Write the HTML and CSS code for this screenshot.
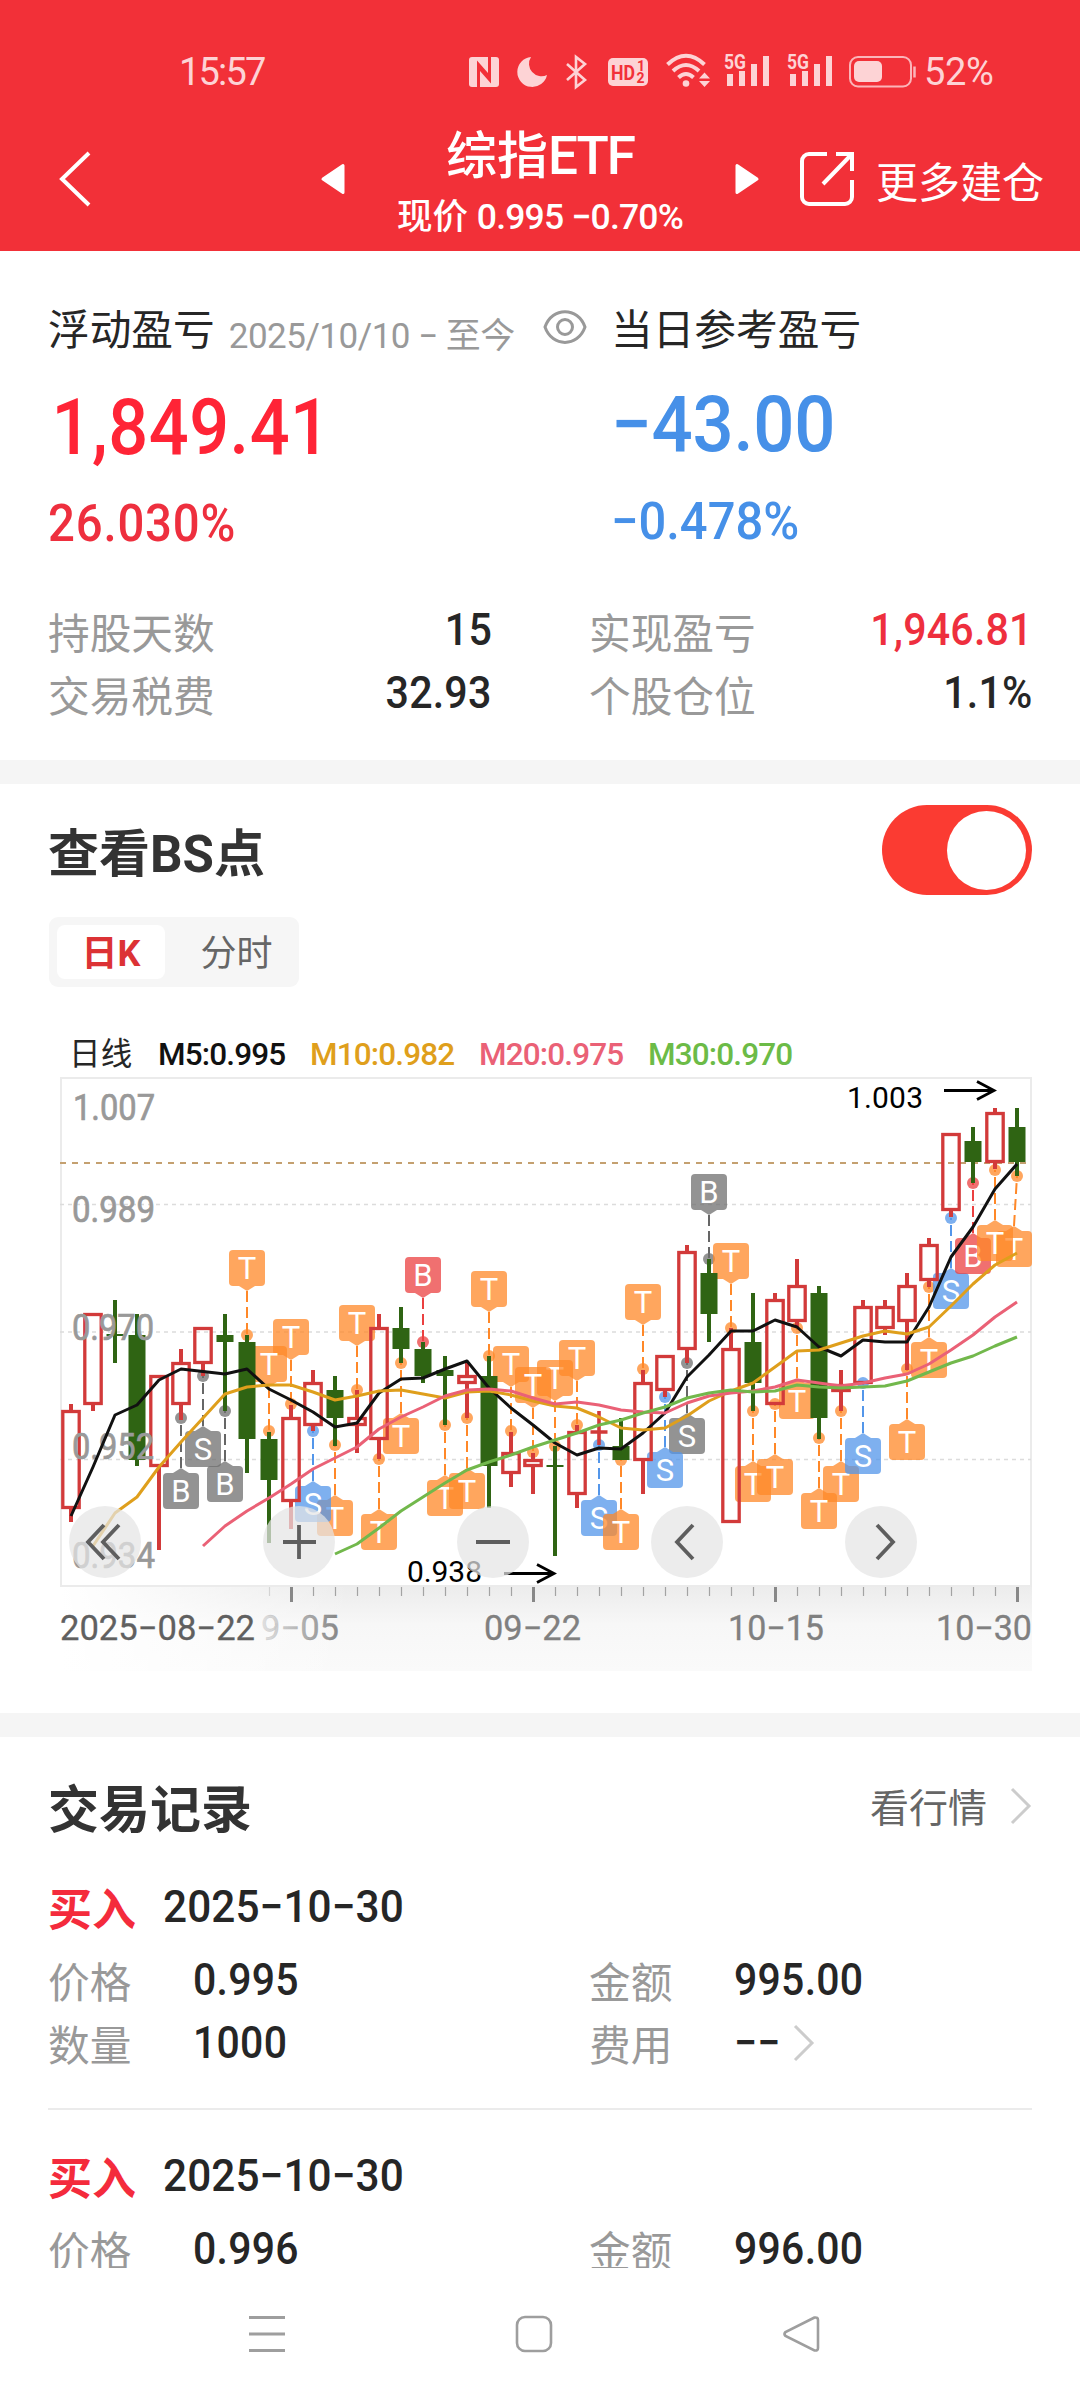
FILE: index.html
```html
<!DOCTYPE html>
<html lang="zh-CN">
<head>
<meta charset="utf-8">
<title>综指ETF</title>
<link rel="stylesheet" href="styles.css">
</head>
<body>
<header class="header">
  <div class="status">
    <span class="clock">15:57</span>
    <svg class="nfc" width="30" height="30" viewBox="0 0 30 30"><rect width="30" height="30" rx="3" fill="#fdd3d5"/><path d="M9.500 30V7.500L20.500 20M20.500 0v22.500L9.500 10" fill="none" stroke="#f23038" stroke-width="3"/></svg>
    <svg class="moon" width="30" height="30" viewBox="0 0 30 30"><path d="M14 0A15 15 0 1 0 30 18A12.500 12.500 0 0 1 14 0Z" fill="#fdd3d5"/></svg>
    <svg class="bt" width="24" height="34" viewBox="0 0 24 34"><path d="M2 9l18 16-9 7V2l9 7L2 25" fill="none" stroke="#fdd3d5" stroke-width="2.600"/></svg>
    <svg class="hd" width="40" height="28" viewBox="0 0 40 28"><rect width="40" height="28" rx="5" fill="#fdd3d5"/><text x="3" y="21.500" class="hd-text" textLength="24" lengthAdjust="spacingAndGlyphs">HD</text><text x="29" y="13" class="hd-num">1</text><text x="28.500" y="25" class="hd-num">2</text></svg>
    <svg class="wifi" width="45" height="34" viewBox="0 0 45 34"><g fill="none" stroke="#fdd3d5" stroke-width="4"><path d="M1.500 11.500Q20 -6 38.500 11.500"/><path d="M7 18Q20 6 33 18"/><path d="M12.500 24.500Q20 17.500 27.500 24.500"/></g><circle cx="20" cy="30.500" r="3.300" fill="#fdd3d5"/><path d="M33 25.500l5.500-6 5.500 6zM33 28l5.500 6 5.500-6z" fill="#fdd3d5"/></svg>
    <svg class="sig" width="46" height="38" viewBox="0 -6 46 38"><text x="0" y="15" class="g5" textLength="22" lengthAdjust="spacingAndGlyphs">5G</text><path d="M3 20h6v12H3zM15 17h6v15h-6zM27 10h6v22h-6zM39 2h6v30h-6z" fill="#fdd3d5"/></svg>
    <svg class="sig sig2" width="46" height="38" viewBox="0 -6 46 38"><text x="0" y="15" class="g5" textLength="22" lengthAdjust="spacingAndGlyphs">5G</text><path d="M3 20h6v12H3zM15 17h6v15h-6zM27 10h6v22h-6zM39 2h6v30h-6z" fill="#fdd3d5"/></svg>
    <svg class="battery" width="67" height="32" viewBox="0 0 67 32"><rect x="1" y="1" width="61" height="29.500" rx="8" fill="none" stroke="#fbb5b9" stroke-width="2"/><rect x="5" y="5" width="28" height="21" rx="5" fill="#fdd3d5"/><path d="M65.500 10.500v11" stroke="#fbb5b9" stroke-width="2.500"/></svg>
    <span class="percent">52%</span>
  </div>
  <div class="titlebar">
    <svg class="back" width="34" height="56" viewBox="0 0 34 56"><path d="M31 2L4 28l27 26" fill="none" stroke="#fff" stroke-width="4"/></svg>
    <svg class="prev" width="24" height="30" viewBox="0 0 24 30"><path d="M22 1.500v27L2 15z" fill="#fff" stroke="#fff" stroke-width="3" stroke-linejoin="round"/></svg>
    <div class="heading">
      <h1>综指<span>ETF</span></h1>
      <p>现价 <span>0.995 −0.70%</span></p>
    </div>
    <svg class="next" width="24" height="30" viewBox="0 0 24 30"><path d="M2 1.500v27L22 15z" fill="#fff" stroke="#fff" stroke-width="3" stroke-linejoin="round"/></svg>
    <svg class="share" width="54" height="54" viewBox="0 0 54 54"><path d="M27 2H9a7 7 0 0 0-7 7v36a7 7 0 0 0 7 7h36a7 7 0 0 0 7-7V28M36 2h16v17M51 3L23 32" fill="none" stroke="#fff" stroke-width="4"/></svg>
    <span class="more">更多建仓</span>
  </div>
</header>

<main>
  <section class="summary">
    <div class="profit">
      <div class="cell">
        <div class="caption">浮动盈亏<span class="period">2025/10/10 − 至今</span>
          <svg class="eye" width="44" height="36" viewBox="0 0 44 36"><path d="M2 18C9 -2.500 35 -2.500 42 18C35 38.500 9 38.500 2 18Z" fill="none" stroke="#999" stroke-width="3"/><circle cx="22" cy="18" r="7.500" fill="none" stroke="#999" stroke-width="3"/></svg>
        </div>
        <div class="big red">1,849.41</div>
        <div class="rate red2">26.030%</div>
      </div>
      <div class="cell today">
        <div class="caption">当日参考盈亏</div>
        <div class="big blue">−43.00</div>
        <div class="rate blue">−0.478%</div>
      </div>
    </div>
    <dl class="stats">
      <div><dt>持股天数</dt><dd>15</dd></div>
      <div><dt>实现盈亏</dt><dd class="red2">1,946.81</dd></div>
      <div><dt>交易税费</dt><dd>32.93</dd></div>
      <div><dt>个股仓位</dt><dd>1.1%</dd></div>
    </dl>
  </section>

  <section class="chart-section">
    <div class="bs-row"><h2>查看BS点</h2><span class="toggle"><i></i></span></div>
    <div class="tabs"><span class="tab active">日K</span><span class="tab">分时</span></div>
    <div class="legend">
      <span class="kind">日线</span><span class="m5">M5:0.995</span><span class="m10">M10:0.982</span><span class="m20">M20:0.975</span><span class="m30">M30:0.970</span>
    </div>
    <svg id="chart" class="chart" width="1080" height="602" viewBox="0 1074 1080 602"></svg>
  </section>

  <section class="records">
    <div class="records-head"><h2>交易记录</h2><span class="quote">看行情</span>
      <svg width="22" height="38" viewBox="0 0 22 38"><path d="M2 2l17 17L2 36" fill="none" stroke="#ccc" stroke-width="3"/></svg>
    </div>
    <article class="record">
      <div class="trade"><b>买入</b><span>2025−10−30</span></div>
      <div class="fields">
        <div><label>价格</label><span>0.995</span></div>
        <div><label>金额</label><span>995.00</span></div>
        <div><label>数量</label><span>1000</span></div>
        <div><label>费用</label><span class="none">−−</span><svg width="22" height="38" viewBox="0 0 22 38"><path d="M2 2l17 17L2 36" fill="none" stroke="#ccc" stroke-width="3"/></svg></div>
      </div>
    </article>
    <article class="record last">
      <div class="trade"><b>买入</b><span>2025−10−30</span></div>
      <div class="fields">
        <div><label>价格</label><span>0.996</span></div>
        <div><label>金额</label><span>996.00</span></div>
      </div>
    </article>
  </section>
</main>

<nav class="nav">
  <svg width="38" height="38" viewBox="0 0 38 38"><path d="M1 2.500h36M1 19h36M1 35.500h36" stroke="#9e9e9e" stroke-width="3"/></svg>
  <svg width="38" height="38" viewBox="0 0 38 38"><rect x="2" y="2" width="34" height="34" rx="8" fill="none" stroke="#9e9e9e" stroke-width="2.600"/></svg>
  <svg width="38" height="38" viewBox="0 0 38 38"><path d="M32.500 2.500L3.500 17Q1.500 19 3.500 21L32.500 35.500Q36 36 36 33V5Q36 2 32.500 2.500Z" fill="none" stroke="#9e9e9e" stroke-width="2.600"/></svg>
</nav>
<script src="chart.js"></script>
</body>
</html>
```
FILE: styles.css
```css
* { box-sizing: border-box; margin: 0; padding: 0; }
body { width: 1080px; height: 2400px; background: #fff; color: #262626; font-family: Roboto, "Noto Sans CJK SC", sans-serif; display: flex; flex-direction: column; overflow: hidden; }
svg { display: block; flex: none; overflow: visible; }
h1, h2 { font-size: 50px; white-space: nowrap; }

.header { height: 251px; flex: none; background: #f23038; color: #fff; }
.status { height: 102px; padding: 41px 0 0 179px; display: flex; align-items: center; color: #fdd3d5; }
.clock { width: 290px; font-size: 38px; letter-spacing: -1.8px; }
.moon { margin-left: 18px; }
.bt { margin-left: 18px; }
.hd { margin-left: 19px; }
.wifi { margin-left: 18px; margin-top: -3px; }
.sig { margin-left: 13px; margin-top: -9px; }
.sig2 { margin-left: 17px; }
.battery { margin-left: 16px; }
.percent { margin-left: 8px; font-size: 38px; letter-spacing: -.3px; }
.hd-text { font: 700 21px Roboto; fill: #f23038; }
.hd-num { font: 700 14px Roboto; fill: #f23038; }
.g5 { font: 700 20px Roboto; fill: #fdd3d5; }

.titlebar { height: 149px; display: flex; align-items: center; padding: 5px 0 0 58px; }
.titlebar .prev { margin-left: 229px; }
.heading { width: 390px; display: flex; flex-direction: column; align-items: center; padding-top: 9px; }
.heading h1 { font-size: 51px; line-height: 66px; font-weight: 500; }
.heading h1 span { font-size: 53px; letter-spacing: -2px; }
.heading p { font-size: 35.500px; line-height: 55px; font-weight: 500; white-space: pre; }
.heading p span { letter-spacing: -.8px; }
.share { margin-left: 41px; }
.more { margin-left: 22px; font-size: 42px; }

main { height: 2017px; flex: none; overflow: hidden; }
.summary { height: 533px; padding: 51px 49px 0 48px; border-bottom: 24px solid #f5f5f5; }
.profit { display: flex; }
.cell { width: 563px; flex: none; }
.today { width: 419px; }
.caption { display: flex; align-items: center; height: 50px; font-size: 41.700px; white-space: pre; }
.period { flex: none; margin: 10px 0 0 14px; color: #999; font-size: 35px; width: 314px; letter-spacing: -.5px; }
.big { height: 84px; line-height: 84px; margin-top: 34px; font-size: 78px; font-weight: 500; letter-spacing: .6px; padding-left: 4px; transform: scaleX(.9); transform-origin: left; }
.rate { height: 60px; line-height: 60px; margin-top: 24px; font-size: 52px; font-weight: 500; letter-spacing: .9px; transform: scaleX(.91); transform-origin: left; }
.today .big { margin-top: 31px; padding: 0; letter-spacing: -.3px; transform: scaleX(.93); }
.today .rate { letter-spacing: 0; margin-top: 25px; transform: scaleX(.94); }
.red { color: #ff2436; }
.red2 { color: #ee2f3e; }
.blue { color: #4690e8; }
.stats { margin-top: 45px; display: grid; grid-template-columns: 442px 442px; column-gap: 99px; grid-auto-rows: 63px; }
.stats div { display: flex; justify-content: space-between; align-items: center; }
.stats dt { font-size: 41.700px; color: #999; }
.stats dd { font-size: 44.500px; font-weight: 500; letter-spacing: .2px; margin: -1px -2px 0 0; transform: scaleX(.925); transform-origin: right; }

.chart-section { height: 953px; border-bottom: 24px solid #f5f5f5; }
.bs-row { height: 133px; padding: 21px 48px 0; display: flex; justify-content: space-between; }
.bs-row h2 { color: #333; line-height: 99px; font-size: 51px; }
.toggle { width: 150px; height: 90px; border-radius: 45px; background: #fb3b32; display: flex; justify-content: flex-end; align-items: center; padding-right: 6px; }
.toggle i { width: 79px; height: 79px; border-radius: 50%; background: #fff; }
.tabs { margin-left: 49px; width: 250px; height: 70px; padding: 8px; border-radius: 9px; background: #f6f6f6; display: flex; font-size: 36px; }
.tab { flex: 1; height: 54px; line-height: 59px; text-align: center; color: #666; padding-left: 17px; }
.tab.active { flex: 0 0 108px; background: #fff; border-radius: 8px; color: #dc3235; font-weight: 700; padding: 0; }
.legend { height: 87px; padding: 45px 0 0 69px; display: flex; font-size: 31.500px; line-height: 45px; font-weight: 500; letter-spacing: -.85px; }
.legend .kind { width: 89px; font-weight: 400; letter-spacing: .3px; }
.legend .m5 { width: 152px; color: #111; }
.legend .m10 { width: 169px; color: #df9f1c; }
.legend .m20 { width: 169px; color: #ea6176; }
.legend .m30 { color: #6cbb47; }
.axis { font-size: 36px; fill: #999; stroke: #999; stroke-width: .7px; }
.dates { font-size: 34.500px; fill: #808080; stroke: #808080; stroke-width: .3px; }
.extreme { font-size: 30px; fill: #000; }
.letter { font-size: 31px; fill: #fff; text-anchor: middle; }

.records { padding: 25px 48px 0; }
.records-head { height: 88px; display: flex; align-items: center; }
.records-head h2 { flex: 1; color: #333; font-size: 51px; }
.quote { font-size: 39px; color: #666; margin-right: 23px; margin-top: -3px; }
.record { height: 260px; padding-top: 23px; border-bottom: 2px solid #ebebeb; }
.record.last { padding-top: 32px; border: 0; }
.trade { display: flex; height: 68px; align-items: center; }
.trade b { width: 115px; font-size: 44px; color: #f42b3c; }
.trade span { font-size: 45px; font-weight: 500; letter-spacing: .1px; margin-top: -2px; transform: scaleX(.94); transform-origin: left; }
.fields { margin-top: 7px; display: grid; grid-template-columns: 541px 1fr; grid-auto-rows: 63px; }
.fields div { display: flex; align-items: center; }
.fields label { width: 145px; font-size: 41.700px; color: #999; }
.fields span { font-size: 44.500px; font-weight: 500; letter-spacing: .3px; transform: scaleX(.92); transform-origin: left; white-space: nowrap; }
.fields .none { width: 48px; }
.fields svg { margin-left: 11px; }

.nav { height: 132px; flex: none; display: flex; gap: 229px; padding: 47px 0 0 248px; }
```
FILE: chart.js
```js
const svg = document.getElementById('chart');
const X = i => 71 + 22 * i;
let out = '';

out += '<defs><linearGradient id="shade" x1="0" y1="0" x2="0" y2="1"><stop offset="0" stop-color="#ececec"/><stop offset=".45" stop-color="#f7f7f7"/><stop offset="1" stop-color="#fafafa"/></linearGradient>' +
  '<linearGradient id="veil"><stop offset="0" stop-color="#fff"/><stop offset=".3" stop-color="#fff" stop-opacity="0"/></linearGradient>' +
  '<linearGradient id="fade" gradientUnits="userSpaceOnUse" x1="250" y1="0" x2="340" y2="0"><stop offset="0" stop-color="#888" stop-opacity=".1"/><stop offset="1" stop-color="#858585"/></linearGradient></defs>';

// Plot frame, date strip and grid
out += '<rect x="61" y="1586" width="971" height="85" fill="url(#shade)"/><rect x="61" y="1586" width="971" height="85" fill="url(#veil)"/>';
out += '<rect x="61" y="1078" width="970" height="508" fill="none" stroke="#ebebeb" stroke-width="2"/>';
[1204.5, 1332, 1459.5].forEach(y => {
  out += `<path d="M60 ${y}H1031" stroke="#dcdcdc" stroke-width="1.3" stroke-dasharray="4 4"/>`;
});
out += '<path d="M60 1163H1031" stroke="#c4a070" stroke-width="2" stroke-dasharray="6 6"/>';

// Trade flags: letter, colour, candle index, anchor y, box top
const colors = { o: '#ff8828', g: '#6f6f6f', r: '#eb4040', b: '#5396ea' };
const flags = `T o 10 1404 1319|T o 9 1431 1346|T o 8 1335 1250|T o 13 1390 1305|B r 16 1342 1257|T o 19 1356 1271|T o 20 1431 1346|T o 22 1446 1360
|T o 21 1452 1367|T o 23 1425 1340|T o 26 1369 1284|B g 29 1259 1174|T o 30 1328 1243|B g 5 1418 1473|S g 6 1376 1431|B g 7 1411 1466|T o 12 1445 1500
|S b 11 1431 1486|T o 14 1459 1514|T o 15 1363 1418|T o 17 1425 1480|T o 18 1418 1473|S b 24 1445 1500|T o 25 1460 1514|S g 28 1363 1418|S b 27 1397 1452
|T o 31 1411 1466|T o 32 1404 1459|T o 33 1328 1383|T o 35 1411 1466|T o 34 1438 1493|S b 36 1383 1438|T o 38 1369 1424|T o 39 1287 1342|S b 40 1218 1273
|B r 41 1183 1238|T o 43 1176 1231|T o 42 1170 1225`.split('|').map(s => s.trim().split(' '));
flags.forEach(([letter, c, i, dot, top]) => {
  const x = X(+i), bx = Math.min(x, 1014);
  dot = +dot; top = +top;
  const above = top < dot, tip = above ? top + 41 : top - 5, base = above ? top + 36 : top;
  out += `<path d="M${bx} ${tip}L${x} ${dot}" stroke="${c === 'g' ? '#666' : colors[c]}" stroke-width="2" stroke-dasharray="11 5"/>`;
  out += `<g fill="${colors[c]}" fill-opacity=".75"><circle cx="${x}" cy="${dot}" r="6"/><rect x="${bx - 18}" y="${top}" width="36" height="36" rx="4"/><path d="M${bx - 8} ${base}L${bx} ${tip}L${bx + 8} ${base}Z"/></g>`;
  out += `<text class="letter" x="${bx}" y="${top + 29}">${letter}</text>`;
});

// Candles: up/down, high, body top, body bottom, low
const candles = `u 1404 1410 1509 1522|u 1313 1313 1405 1411|d 1300 1334 1336 1363|d 1314 1335 1460 1466|u 1375 1375 1467 1550|u 1349 1362 1405 1420|u 1327 1327 1364 1376
|d 1314 1335 1342 1411|d 1335 1342 1439 1473|d 1432 1439 1480 1543|u 1405 1417 1502 1529|u 1370 1382 1426 1431|d 1376 1390 1418 1446|u 1390 1417 1426 1453
|u 1314 1327 1440 1459|d 1307 1328 1349 1363|d 1342 1349 1376 1383|d 1356 1370 1376 1425|u 1362 1375 1384 1418|d 1356 1376 1466 1508|u 1432 1452 1474 1487
|u 1453 1459 1467 1494|d 1446 1465 1467 1556|u 1425 1431 1495 1508|u 1411 1430 1434 1445|d 1418 1446 1460 1460|u 1370 1382 1461 1494|u 1355 1355 1391 1397
|u 1245 1251 1350 1363|d 1259 1273 1314 1342|u 1328 1348 1523 1523|d 1293 1342 1383 1411|u 1293 1299 1405 1405|u 1259 1285 1322 1328|d 1286 1293 1418 1439
|u 1370 1384 1392 1411|u 1300 1306 1384 1384|u 1300 1306 1329 1335|u 1273 1285 1322 1370|u 1238 1244 1281 1287|u 1133 1133 1211 1217|d 1127 1141 1162 1183
|u 1108 1112 1163 1169|d 1108 1127 1162 1176`.split('|').map(s => s.trim().split(' '));
candles.forEach(([dir, h, t, b, l], i) => {
  const x = X(i);
  if (dir === 'd') {
    out += `<path d="M${x} ${h}V${l}" stroke="#2f6413" stroke-width="4"/><rect x="${x - 8.5}" y="${t}" width="17" height="${b - t}" fill="#2f6413"/>`;
  } else if (b - t < 5) {
    out += `<path d="M${x} ${h}V${l}M${x - 8.5} ${+t + 2}H${x + 8.5}" stroke="#d23a3a" stroke-width="3.6"/>`;
  } else {
    out += `<path d="M${x} ${h}V${t}M${x} ${b}V${l}" stroke="#d23a3a" stroke-width="4"/><rect x="${x - 8.2}" y="${+t + 1.5}" width="16.400" height="${b - t - 3}" fill="none" stroke="#d23a3a" stroke-width="3.3"/>`;
  }
});

// Price scale
[['1.007', 73, 1120, 82], ['0.989', 72, 1222, 83], ['0.970', 72, 1340, 82], ['0.952', 72, 1459, 82], ['0.934', 72, 1568, 83]].forEach(([t, x, y, w]) => {
  out += `<text class="axis" x="${x}" y="${y}" textLength="${w}" lengthAdjust="spacingAndGlyphs">${t}</text>`;
});

// Moving averages, each starting at its first candle
const averages = [
  ['#111', 0, [1516,1467,1415,1405,1380,1369,1371.5,1374,1369,1389,1400,1412,1427,1423,1393,1379,1378,1369,1361,1388,1408,1425,1443,1455,1448,1449,1433,1413,1377,1355,1331,1331,1320,1327,1347,1356,1340,1342,1342,1307,1257,1227,1189,1164]],
  ['#df9f1c', 1, [1546,1513,1497,1467,1442,1418,1394,1387,1385,1385,1392,1400,1396,1391,1390,1394,1398,1392,1391,1395,1401,1406,1408,1417,1428,1430,1428,1416,1401,1391,1383,1367,1351,1350,1343,1336,1331,1334,1327,1306,1284,1265,1253]],
  ['#ea6176', 6, [1546,1526,1511,1498,1484,1469,1458,1447,1429,1417,1407,1396,1390,1389,1391,1398,1404,1402,1405,1410,1412,1413,1403,1396,1393,1391,1387,1380,1383,1386,1383,1378,1374,1364,1350,1335,1317,1302]],
  ['#72b84c', 12, [1554,1544,1528,1511,1497,1483,1470,1462,1455,1447,1440,1433,1425,1420,1413,1407,1398,1393,1390,1392,1391,1385,1387,1388,1387,1386,1381,1372,1363,1356,1346,1337]]
];
averages.forEach(([color, start, ys]) => {
  out += `<polyline points="${ys.map((y, k) => X(start + k) + ',' + y).join(' ')}" fill="none" stroke="${color}" stroke-width="3" stroke-linejoin="round"/>`;
});

// Extremes
out += '<text class="extreme" x="847" y="1108" textLength="76">1.003</text><path d="M944 1090.500H994M977 1081.500L994 1090.500L977 1099.500" fill="none" stroke="#000" stroke-width="2.800"/>';
out += '<text class="extreme" x="407" y="1582" textLength="75">0.938</text><path d="M504 1573.500H554M537 1564.500L554 1573.500L537 1582.500" fill="none" stroke="#000" stroke-width="2.800"/>';

// Date axis
for (let i = 9; i < 44; i++) {
  const major = [10, 21, 32, 43].includes(i);
  out += `<path d="M${X(i) + .5} 1587V${major ? 1602 : 1596}" stroke="${i === 9 ? '#d4d4d4' : major ? '#888' : '#a3a3a3'}" stroke-width="${major ? 3 : 1.2}"/>`;
}
[['2025−08−22', 60, 195, '#606060'], ['9−05', 261, 78, 'url(#fade)'], ['09−22', 484, 97], ['10−15', 728, 96], ['10−30', 936, 96]].forEach(([t, x, w, fill]) => {
  out += `<text class="dates" x="${x}" y="1640" textLength="${w}" lengthAdjust="spacingAndGlyphs"${fill ? ` style="fill:${fill};stroke:${fill}"` : ''}>${t}</text>`;
});

// Zoom and scroll buttons
[[105, 'M-1 -17L-17 0L-1 17M14 -17L-2 0L14 17'], [299, 'M-16 0H17M0 -17V17'], [493, 'M-17 0H17'], [687, 'M6 -17L-10 0L6 17'], [881, 'M-4 -17L12 0L-4 17']].forEach(([x, d]) => {
  out += `<g transform="translate(${x} 1542)"><circle r="36" fill="#e4e4e4" fill-opacity=".72"/><path d="${d}" fill="none" stroke="#5e5e5e" stroke-width="3.800"/></g>`;
});

svg.innerHTML = out;
```
